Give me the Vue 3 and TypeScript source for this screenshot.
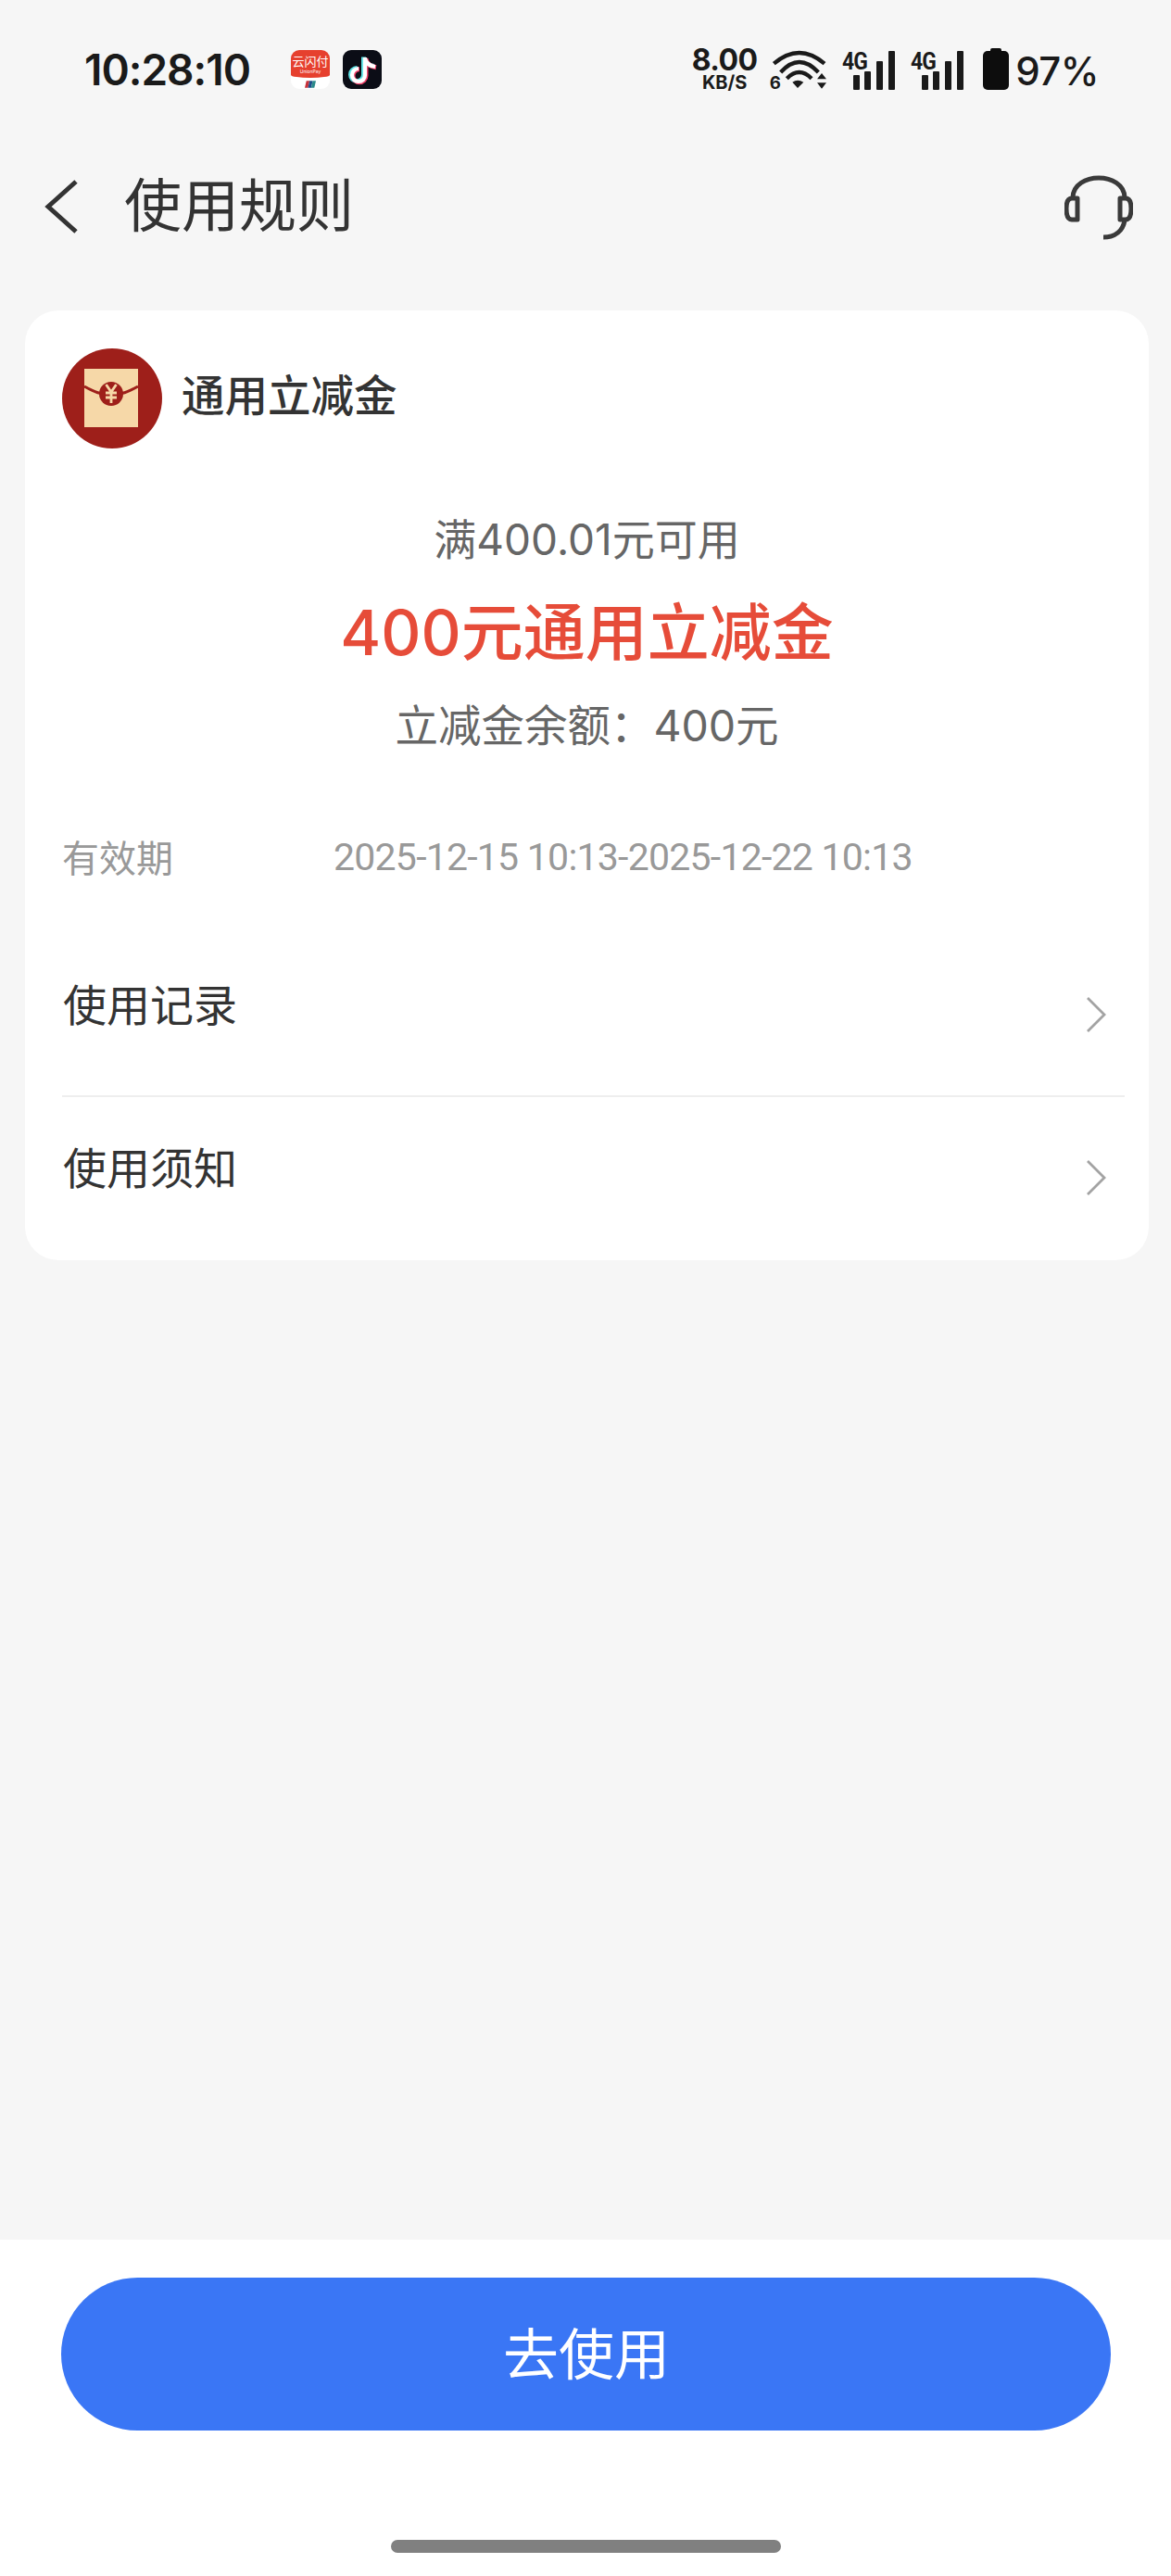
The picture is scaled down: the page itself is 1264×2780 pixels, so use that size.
<script setup lang="ts">
const time = "10:28:10";

const rows = ["使用记录", "使用须知"];

const signals = [0, 1];

const noteShape = "M24 8v19a7 7 0 1 1-7-7M24 9c1 5 5 8 11 9";
</script>

<template>
  <div class="page">
    <div class="status">
      <div class="status-left">
        <span class="time">{{ time }}</span>
        <div class="apps">
          <div class="app-union">
            <div class="union-top">
              <span class="union-cn">云闪付</span>
              <span class="union-en">UnionPay</span>
            </div>
            <svg class="union-mark" viewBox="0 0 14 9" width="12" height="8">
              <path d="M2 0h4L4 9H0z" fill="#c8323a" />
              <path d="M6 0h4L8 9H4z" fill="#1f4e8c" />
              <path d="M10 0h4l-2 9H8z" fill="#2a8a8a" />
            </svg>
          </div>
          <svg class="app-tiktok" viewBox="0 0 42 42" width="42" height="42">
            <rect width="42" height="42" rx="9" fill="#0b0d16" />
            <path :d="noteShape" fill="none" stroke="#5fe3e6" stroke-width="5" transform="translate(-1.500 -0.500)" />
            <path :d="noteShape" fill="none" stroke="#f0416a" stroke-width="5" transform="translate(1 0.800)" />
            <path :d="noteShape" fill="none" stroke="#fff" stroke-width="4.200" />
          </svg>
        </div>
      </div>
      <div class="status-right">
        <div class="speed">
          <span class="speed-num">8.00</span>
          <span class="speed-unit">KB/S</span>
        </div>
        <svg class="wifi" viewBox="9 25 204 135" width="68" height="45">
          <path d="M28 72Q110 2 192 72" fill="none" stroke="#1a1a1a" stroke-width="13" />
          <path d="M50 100Q110 34 172 100" fill="none" stroke="#1a1a1a" stroke-width="13" />
          <path d="M70 120Q110 80 150 120" fill="none" stroke="#1a1a1a" stroke-width="13" />
          <path d="M88 132Q105 120 124 132L105 151Z" fill="#1a1a1a" />
          <path d="M183 103L198 122H168ZM183 153L198 134H168Z" fill="#1a1a1a" />
          <text x="14" y="155" class="wifi-six">6</text>
        </svg>
        <div v-for="s in signals" :key="s" class="signal">
          <span class="signal-tag">4G</span>
          <i class="bar bar-1"></i>
          <i class="bar bar-2"></i>
          <i class="bar bar-3"></i>
          <i class="bar bar-4"></i>
        </div>
        <div class="battery"></div>
        <span class="percent">97%</span>
      </div>
    </div>

    <div class="nav">
      <div class="nav-left">
        <svg class="back" viewBox="0 0 40 60" width="40" height="60">
          <path d="M36 3L6 30L36 57" fill="none" stroke="#333" stroke-width="5" />
        </svg>
        <span class="nav-title">使用规则</span>
      </div>
      <svg class="headset" viewBox="0 0 74 70" width="74" height="70">
        <path d="M9 24C10 -4 64 -4 65 24" fill="none" stroke="#3a3a3a" stroke-width="5" />
        <path d="M14 25V48H8C4 48 2 44 2 36C2 29 4 25 8 25Z" fill="none" stroke="#3a3a3a" stroke-width="5" stroke-linejoin="round" />
        <path d="M60 25V48H66C70 48 72 44 72 36C72 29 70 25 66 25Z" fill="none" stroke="#3a3a3a" stroke-width="5" stroke-linejoin="round" />
        <path d="M65 49C63 60 55 67 42 67" fill="none" stroke="#3a3a3a" stroke-width="5" />
      </svg>
    </div>

    <div class="card">
      <div class="card-head">
        <svg class="coupon-icon" viewBox="0 0 108 108" width="108" height="108">
          <circle cx="54" cy="54" r="54" fill="#9e1f1a" />
          <rect x="24" y="22" width="58" height="63" fill="#f6d8a8" />
          <path d="M24 41C35 47 42 50 53 50C64 50 71 47 82 41" fill="none" stroke="#9e1f1a" stroke-width="3" />
          <circle cx="53" cy="49" r="13" fill="#9e1f1a" />
          <path d="M47.500 39l5.500 8 5.500-8M53 47v12M47 48h12M47 53h12" fill="none" stroke="#f6d8a8" stroke-width="2.800" />
        </svg>
        <span class="card-name">通用立减金</span>
      </div>

      <div class="summary">
        <div class="rule">满400.01元可用</div>
        <div class="amount">400元通用立减金</div>
        <div class="balance">立减金余额：400元</div>
      </div>

      <div class="validity">
        <span class="validity-label">有效期</span>
        <span class="validity-date">2025-12-15 10:13-2025-12-22 10:13</span>
      </div>

      <div class="links">
        <div v-for="row in rows" :key="row" class="link-row">
          <span class="link-text">{{ row }}</span>
          <svg class="chevron" viewBox="0 0 24 40" width="24" height="40">
            <path d="M3 2L21 20L3 38" fill="none" stroke="#a3a3a3" stroke-width="2.800" />
          </svg>
        </div>
      </div>
    </div>

    <div class="spacer"></div>

    <div class="footer">
      <button class="use-btn">去使用</button>
      <div class="home-bar"></div>
    </div>
  </div>
</template>

<style>
html,
body {
  margin: 0;
  background: #f6f6f6;
}
</style>

<style scoped>
.page {
  width: 1264px;
  height: 2780px;
  display: flex;
  flex-direction: column;
  background: #f6f6f6;
  font-family: Inter, "Noto Sans CJK SC", sans-serif;
  color: #333;
  overflow: hidden;
}

.status {
  height: 100px;
  padding: 50px 78px 0 91px;
  box-sizing: border-box;
  display: flex;
  justify-content: space-between;
  align-items: flex-start;
}

.status-left {
  display: flex;
  align-items: center;
  height: 50px;
}

.time {
  width: 223px;
  font-size: 46px;
  line-height: 50px;
  font-weight: 600;
  letter-spacing: -1px;
  color: #1a1a1a;
}

.apps {
  display: flex;
  gap: 14px;
}

.app-union {
  width: 42px;
  height: 42px;
  border-radius: 9px;
  overflow: hidden;
  background: #fff;
  display: flex;
  flex-direction: column;
  align-items: center;
}

.union-top {
  width: 100%;
  height: 30px;
  background: #e6402e;
  border-radius: 0 0 50% 50% / 0 0 3px 3px;
  color: #fff;
  display: flex;
  flex-direction: column;
  align-items: center;
}

.union-cn {
  font-size: 13px;
  line-height: 16px;
  margin-top: 4px;
  white-space: nowrap;
}

.union-en {
  font-size: 5px;
  line-height: 6px;
}

.union-mark {
  margin-top: 3px;
}

.status-right {
  display: flex;
  align-items: flex-start;
}

.speed {
  width: 70px;
  display: flex;
  flex-direction: column;
  align-items: center;
  color: #1a1a1a;
  font-weight: 700;
}

.speed-num {
  font-size: 32px;
  line-height: 30px;
  letter-spacing: -0.5px;
}

.speed-unit {
  font-size: 20px;
  line-height: 16px;
  margin-top: 1px;
}

.wifi {
  margin: 3px 0 0 12px;
  overflow: visible;
}

.wifi-six {
  font-size: 56px;
  font-weight: 700;
  fill: #1a1a1a;
}

.signal {
  position: relative;
  width: 45px;
  height: 42px;
  margin: 5px 0 0 29px;
}

.wifi + .signal {
  margin-left: 24px;
}

.signal-tag {
  position: absolute;
  left: -12px;
  top: -3px;
  font-family: Roboto, sans-serif;
  font-size: 26px;
  line-height: 28px;
  font-weight: 700;
  letter-spacing: -1px;
  transform: scaleX(0.88);
  transform-origin: left center;
  color: #1a1a1a;
}

.bar {
  position: absolute;
  bottom: 0;
  width: 7px;
  border-radius: 1px;
  background: #1a1a1a;
}

.bar-1 {
  left: 0;
  height: 16px;
}

.bar-2 {
  left: 12px;
  height: 20px;
}

.bar-3 {
  left: 25px;
  height: 31px;
}

.bar-4 {
  left: 38px;
  height: 42px;
}

.battery {
  position: relative;
  width: 28px;
  height: 42px;
  margin: 5px 0 0 21px;
  border-radius: 5px;
  background: #0d0d0d;
}

.battery::before {
  content: "";
  position: absolute;
  left: 8px;
  top: -3px;
  width: 12px;
  height: 4px;
  border-radius: 2px 2px 0 0;
  background: #0d0d0d;
}

.percent {
  margin: 3px 0 0 7px;
  font-size: 42px;
  line-height: 48px;
  font-weight: 500;
  letter-spacing: -0.5px;
  color: #1a1a1a;
}

.nav {
  height: 235px;
  padding: 88px 41px 0 46px;
  box-sizing: border-box;
  display: flex;
  justify-content: space-between;
  align-items: flex-start;
}

.nav-left {
  display: flex;
  align-items: center;
  height: 70px;
}

.back {
  margin-right: 48px;
}

.nav-title {
  font-size: 62px;
  line-height: 70px;
  color: #333;
}

.headset {
  margin-top: 1px;
}

.card {
  width: 1213px;
  height: 1025px;
  margin-left: 27px;
  padding: 41px 26px 0 40px;
  box-sizing: border-box;
  background: #fff;
  border-radius: 36px;
}

.card-head {
  display: flex;
  align-items: center;
  gap: 21px;
}

.card-name {
  font-size: 46.500px;
  line-height: 108px;
  font-weight: 500;
  margin-top: -6px;
  color: #333;
}

.summary {
  margin: 68px 0 0 -40px;
  width: 1213px;
  display: flex;
  flex-direction: column;
  align-items: center;
}

.rule,
.balance {
  font-size: 46px;
  line-height: 60px;
  color: #666;
}

.amount {
  margin-top: 31px;
  font-size: 67px;
  line-height: 80px;
  font-weight: 500;
  color: #e64c39;
}

.balance {
  margin-top: 30px;
  font-size: 46.500px;
}

.validity {
  display: flex;
  align-items: center;
  margin-top: 82px;
  height: 60px;
  color: #999;
}

.validity-label {
  width: 293px;
  font-size: 40px;
  margin-top: -2px;
}

.validity-date {
  font-family: Roboto, "Noto Sans CJK SC", sans-serif;
  font-size: 41px;
  letter-spacing: -0.76px;
}

.links {
  margin-top: 52px;
}

.link-row {
  height: 175px;
  padding-right: 19px;
  display: flex;
  justify-content: space-between;
  align-items: center;
  box-sizing: border-box;
}

.link-row + .link-row {
  border-top: 2px solid #eeeeee;
}

.link-text {
  font-size: 47px;
  color: #333;
  margin: -26px 0 0 1px;
}

.spacer {
  flex: 1;
}

.footer {
  height: 363px;
  padding-top: 41px;
  box-sizing: border-box;
  background: #fff;
  display: flex;
  flex-direction: column;
  align-items: center;
}

.use-btn {
  width: 1133px;
  height: 165px;
  padding: 0 0 8px 2px;
  border: none;
  border-radius: 83px;
  background: #3a76f5;
  color: #fff;
  font-family: inherit;
  font-size: 60px;
}

.home-bar {
  width: 421px;
  height: 14px;
  margin-top: 118px;
  border-radius: 7px;
  background: #808080;
}
</style>
